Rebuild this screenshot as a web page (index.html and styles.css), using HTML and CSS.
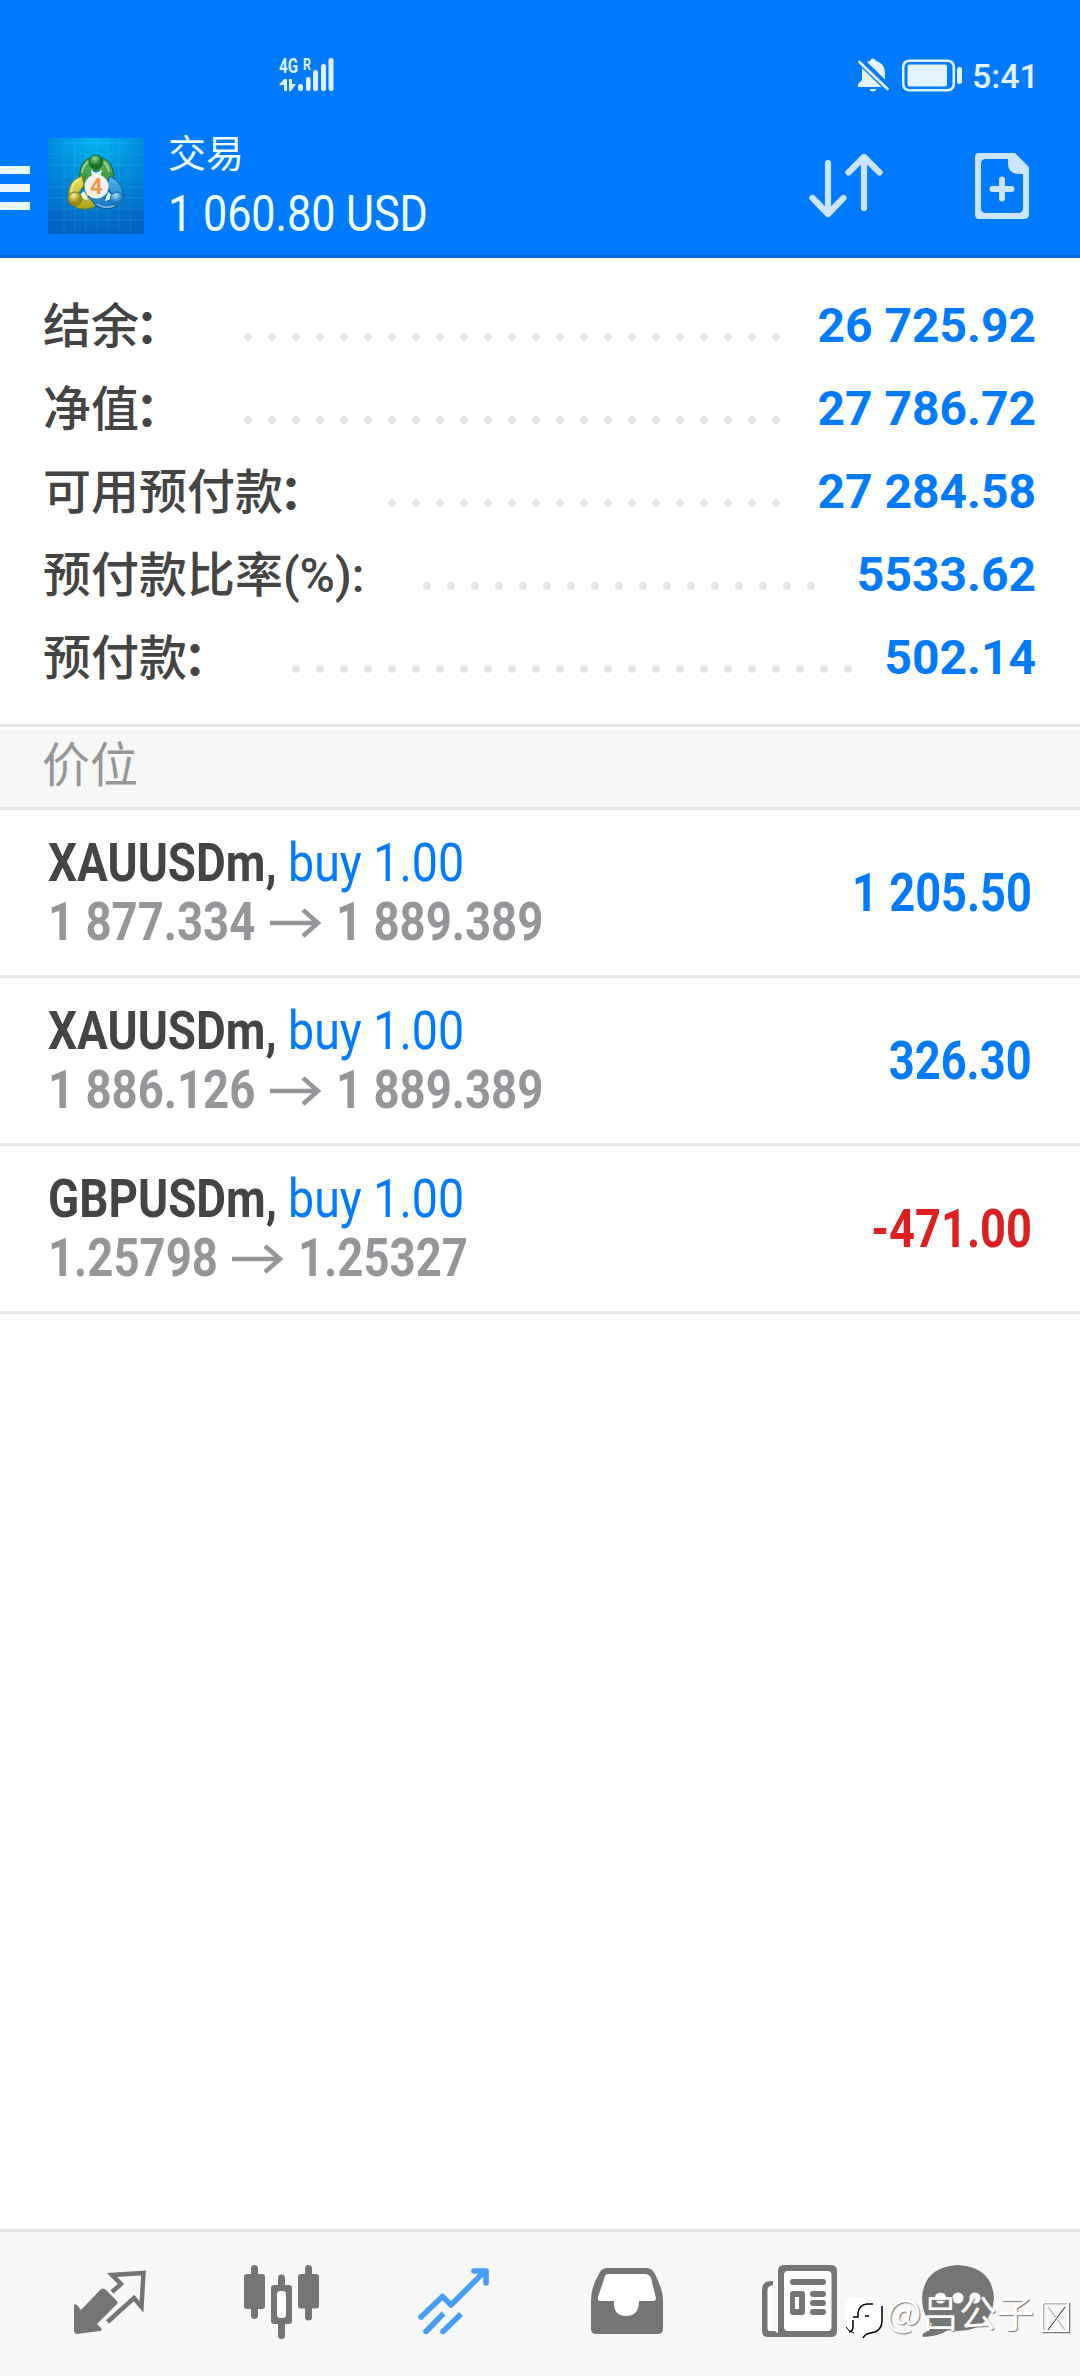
FILE: index.html
```html
<!DOCTYPE html>
<html lang="zh-CN">
<head>
<meta charset="utf-8">
<title>交易</title>
<link rel="stylesheet" href="styles.css">
</head>
<body>
<div class="screen">
  <header class="header">
    <div class="status">
      <svg class="signal" width="60" height="40" viewBox="276 54 60 40">
        <g fill="#dff2ff">
          <text class="net" x="279" y="73" font-size="20" textLength="19" lengthAdjust="spacingAndGlyphs">4G</text>
          <text class="net" x="303" y="70" font-size="16" textLength="8" lengthAdjust="spacingAndGlyphs">R</text>
          <path d="M284 79h3v12h-3v-6h-5zM289 79h3v5h4l-5 7h-2z"/>
          <rect x="298" y="84" width="5" height="7" rx="2.2"/><rect x="306" y="77" width="4.6" height="14" rx="2.2"/><rect x="313" y="70" width="5" height="21" rx="2.2"/><rect x="321" y="64" width="5" height="27" rx="2.2"/><rect x="328.500" y="58" width="5" height="33" rx="2.2"/>
        </g>
      </svg>
      <div class="status-right">
        <svg width="32" height="34" viewBox="857 58 32 34" fill="#e5f2ff">
          <path d="M861.500 67.500l20 19.500h-23.500v-3l4-4v-8.500q0-2 .8-4zM867 62q2-1 3.500-1.500q.5-2 2.500-2t2.500 2q9.500 3 9.500 12v7zM869.500 89h7q-1 2.500-3.500 2.500t-3.500-2.500z"/>
          <path d="M859.500 62l28 27" stroke="#e5f2ff" stroke-width="2.600" stroke-linecap="round"/>
        </svg>
        <svg width="60" height="34" viewBox="902 58 60 34" fill="#e5f2ff">
          <rect x="903.200" y="60.700" width="50.600" height="29.600" rx="6" fill="none" stroke="#d9f2ff" stroke-width="2.600"/>
          <rect x="907.500" y="64.500" width="39.500" height="22" rx="2"/><rect x="957" y="67" width="5" height="17" rx="2.300"/>
        </svg>
        <span class="clock">5:41</span>
      </div>
    </div>
    <div class="toolbar">
      <div class="menu"><i></i><i></i><i></i></div>
      <svg class="logo" width="96" height="96" viewBox="0 0 96 96">
        <defs>
          <radialGradient id="sky" cx=".5" cy="0" r="1"><stop offset="0" stop-color="#00b6f2"/><stop offset=".55" stop-color="#0086d8"/><stop offset="1" stop-color="#0064c0"/></radialGradient>
          <linearGradient id="gr" x2="0" y2="1"><stop stop-color="#66b95c"/><stop offset="1" stop-color="#248638"/></linearGradient>
          <linearGradient id="ye" x2="0" y2="1"><stop stop-color="#ece35c"/><stop offset="1" stop-color="#aaa51c"/></linearGradient>
          <linearGradient id="bl" x2="0" y2="1"><stop stop-color="#55b6ef"/><stop offset="1" stop-color="#1673be"/></linearGradient>
          <radialGradient id="gb" cx=".4" cy=".25"><stop stop-color="#98d88c"/><stop offset="1" stop-color="#17722c"/></radialGradient>
          <radialGradient id="yb" cx=".4" cy=".25"><stop stop-color="#fff28a"/><stop offset="1" stop-color="#968d14"/></radialGradient>
          <radialGradient id="bb" cx=".4" cy=".25"><stop stop-color="#a6defa"/><stop offset="1" stop-color="#1675c2"/></radialGradient>
        </defs>
        <rect width="96" height="96" fill="url(#sky)"/>
        <path d="M0 5h96M0 16h96M0 27h96M0 38h96M0 49h96M0 60h96M0 71h96M0 82h96M16 0v96M27 0v96M38 0v96M49 0v96M60 0v96M71 0v96M82 0v96" stroke="#7edcff" stroke-opacity=".13"/>
        <path d="M33 51Q27 20 48 19Q69 20 65 48L57 52L50 32H46L40 48z" fill="url(#gr)" stroke="#16632a"/>
        <path d="M34 38Q18 43 21 61Q28 76 46 69L54 61L46 51L28 59L36 47z" fill="url(#ye)" stroke="#7c7918"/>
        <path d="M62 38Q78 46 75 65Q61 75 48 68L40 58L51 57L63 64L65 57L58 48z" fill="url(#bl)" stroke="#115993"/>
        <path d="M34 35Q35 23 48 22Q60 23 61 34M24 57Q22 46 31 41M49 66Q57 72 68 67" fill="none" stroke="#fff" stroke-opacity=".5" stroke-width="1.500"/>
        <path d="M43 32l5 3 6-3-2 7h-8zM29 59l7-6 4 9zM67 60l-7-6-3 9z" fill="#effff5"/>
        <circle cx="48" cy="24" r="7" fill="url(#gb)" stroke="#17672b"/><circle cx="27" cy="61" r="7" fill="url(#yb)" stroke="#827e15"/><circle cx="69" cy="61" r="7" fill="url(#bb)" stroke="#126aaf"/>
        <circle cx="48.500" cy="48.500" r="12" fill="#f1f1f1"/>
        <text class="four" x="42" y="56">4</text>
      </svg>
      <div class="heading">
        <div class="title">交易</div>
        <div class="total"><span class="cond">1 060.80 USD</span></div>
      </div>
      <div class="actions">
        <svg width="76" height="70" viewBox="808 152 76 70" fill="none" stroke="#cce4ff" stroke-width="6.200" stroke-linecap="round" stroke-linejoin="round"><path d="M828 163v51M812.500 198l15.500 16 15.500-16M864 208v-51M848.500 172.500L864 157l15.500 15.500"/></svg>
        <svg width="56" height="68" viewBox="974 152 56 68"><path d="M979 153h36l14 14v47q0 5-5 5h-45q-4 0-4-5v-57q0-4 4-4zM986 159q-5 0-5 5v44q0 5 5 5h32q5 0 5-5v-34h-5q-10-1-10-10v-5z" fill="#cce4ff" fill-rule="evenodd"/><path d="M1002 179.500v19M992.500 189h19" stroke="#cce4ff" stroke-width="6" stroke-linecap="round"/></svg>
      </div>
    </div>
  </header>

  <section class="summary">
    <div class="row"><span class="label w192">结余<span class="colon">：</span></span><i class="dots n23"></i><b>26 725.92</b></div>
    <div class="row"><span class="label w192">净值<span class="colon">：</span></span><i class="dots n23"></i><b>27 786.72</b></div>
    <div class="row"><span class="label w336">可用预付款<span class="colon">：</span></span><i class="dots n17"></i><b>27 284.58</b></div>
    <div class="row"><span class="label w371">预付款比率(%):</span><i class="dots n17"></i><b>5533.62</b></div>
    <div class="row"><span class="label w240">预付款<span class="colon">：</span></span><i class="dots n24"></i><b>502.14</b></div>
  </section>

  <h2 class="section">价位</h2>

  <main class="positions">
    <div class="position">
      <div class="info">
        <div class="line"><span class="symbol"><b class="cond bold">XAUUSDm,</b></span><span class="buy cond">buy 1.00</span></div>
        <div class="line prices"><span class="from long"><span class="cond bold">1 877.334</span></span><svg class="arrow" width="52" height="30" viewBox="0 0 52 30"><path d="M0 15h48M33 2l15 13-15 13"/></svg><span class="cond bold">1 889.389</span></div>
      </div>
      <span class="profit cond bold">1 205.50</span>
    </div>
    <div class="position">
      <div class="info">
        <div class="line"><span class="symbol"><b class="cond bold">XAUUSDm,</b></span><span class="buy cond">buy 1.00</span></div>
        <div class="line prices"><span class="from long"><span class="cond bold">1 886.126</span></span><svg class="arrow" width="52" height="30" viewBox="0 0 52 30"><path d="M0 15h48M33 2l15 13-15 13"/></svg><span class="cond bold">1 889.389</span></div>
      </div>
      <span class="profit cond bold">326.30</span>
    </div>
    <div class="position">
      <div class="info">
        <div class="line"><span class="symbol"><b class="cond bold">GBPUSDm,</b></span><span class="buy cond">buy 1.00</span></div>
        <div class="line prices"><span class="from"><span class="cond bold">1.25798</span></span><svg class="arrow" width="52" height="30" viewBox="0 0 52 30"><path d="M0 15h48M33 2l15 13-15 13"/></svg><span class="cond bold">1.25327</span></div>
      </div>
      <span class="profit loss cond bold">-471.00</span>
    </div>
  </main>

  <nav class="tabs">
    <svg viewBox="24 2232 172 144"><path d="M74 2306q0-3 3-1l4 5 19-20q3-3 6 0l10 10q3 3 0 5l-19 19 4 4q2 2-1 3l-23 3q-3 0-3-4z"/><path d="M112 2292l9-8-9-9 31.500-2-2 34-7.500-9-26.500 24" fill="none" stroke="#757575" stroke-width="4.500"/></svg>
    <svg viewBox="196 2232 172 144"><rect x="251" y="2265" width="7" height="54" rx="3.500"/><rect x="244" y="2274" width="21" height="35" rx="3"/><rect x="305" y="2265" width="7" height="55.500" rx="3.500"/><rect x="298" y="2274" width="21" height="34.500" rx="3"/><rect x="278" y="2274.500" width="7" height="64.500" rx="3.500"/><rect x="271" y="2285" width="21" height="39" rx="3"/><rect x="277" y="2291" width="9" height="27" rx="3.500" fill="#fff"/></svg>
    <svg viewBox="368 2232 172 144"><g fill="none" stroke="#469cf9" stroke-width="5.600" stroke-linecap="round" stroke-linejoin="round"><path d="M421 2317l21.500-20.500 8.500 8.500 34-34M474 2271h12v12"/><path stroke-linecap="butt" d="M443.500 2313.500l-17.500 18M461 2314l-18 17.500"/><path d="M426 2331.500h.1M443 2331.500h.1"/></g></svg>
    <svg viewBox="540 2232 172 144"><path d="M607 2268h40q5 0 8 6 8 16 8 26v29q0 5-5 5h-62q-5 0-5-5v-29q0-13 8-26 2-6 8-6z"/><path d="M608 2274h37q4 0 6 4l5 20q0 3-3 3h-14q0 15-13 15t-12-15h-13q-4 0-3-4l6-18q1-5 4-5z" fill="#fff"/></svg>
    <svg viewBox="712 2232 172 144"><path d="M773 2281q-11-1-11 9v41q0 6 6 6h63q6 0 6-6v-60q0-6-6-6h-47q-6 0-6 6v61q-1 2-2 0 1-1-3-1t-5-4v-37q0-4 5-5z"/><rect x="784" y="2271" width="47.500" height="60" rx="4" fill="#fff"/><path d="M772.500 2286v45h-3q-2 0-2-3v-38q0-4 5-4z" fill="#fff"/><rect x="790" y="2279" width="36" height="6" rx="3"/><rect x="790" y="2291" width="15" height="24" rx="3"/><rect x="795" y="2297" width="4" height="12" fill="#fff"/><rect x="810" y="2291" width="16" height="6" rx="3"/><rect x="810" y="2300" width="16" height="6" rx="3"/><rect x="810" y="2309" width="16" height="6" rx="3"/></svg>
    <svg viewBox="884 2232 172 144"><path d="M923 2337q-2-3 3-5 4-3 6-8Q922 2315 922 2298q2-31 36-33 34 2 36 33-2 32-36 33-4 0-10-1-8 6-25 7z"/><g fill="#fff"><circle cx="940.500" cy="2298" r="5.600"/><circle cx="958" cy="2298" r="5.600"/><circle cx="975" cy="2298" r="5.600"/></g></svg>
  </nav>

  <div class="watermark">
    <svg class="mark" width="44" height="50" viewBox="840 2292 44 50"><path d="M843 2306q1-9 10-9h16q9 0 10 9v14q0 12-12 13l-6 5v-5h-8q-10-1-10-13z" fill="#fff"/><path d="M851 2317h5v-4q1-8 9-9h6M863 2316h4M851 2320v7q0 4-4 5M880 2306v14q0 12-12 13-5 1-7 5" fill="none" stroke="#000" stroke-width="1.500"/><path d="M844 2327q3 5 8 6" fill="none" stroke="#000"/></svg>
    <span class="author">@吕公子</span>
    <svg class="box" width="32" height="34" viewBox="1040 2297 32 34" fill="none"><path d="M1043.500 2300.500h26v29h-26z" stroke="#777" stroke-width="1.500"/><path d="M1048 2327l17-23" stroke="#222"/><path d="M1048 2304l17 23" stroke="#888" stroke-width=".8"/><path d="M1042.500 2299.500h25.500v28.500h-25.500z" stroke="#fff" stroke-width="2"/></svg>
  </div>
</div>
</body>
</html>
```
FILE: styles.css
```css
* { box-sizing: border-box; }
body {
  margin: 0;
  background: #fff;
  font-family: Roboto, "Noto Sans CJK SC", sans-serif;
  color: #444;
}
.screen {
  position: relative;
  display: flex;
  flex-direction: column;
  width: 1080px;
  height: 2376px;
  overflow: hidden;
}
svg { display: block; flex: none; }
.cond {
  display: inline-block;
  white-space: pre;
  transform: scaleX(.862);
  transform-origin: 0 50%;
}
.cond.bold { transform: scaleX(.843); }

/* Header */
.header {
  height: 258px;
  background: #007aff;
  border-bottom: 3px solid #006ad8;
  color: #f0ffff;
}
.status {
  display: flex;
  justify-content: space-between;
  height: 120px;
  padding: 54px 45px 0 276px;
}
.net { font-weight: 700; }
.status-right { display: flex; padding-top: 4px; }
.status-right svg:nth-child(2) { margin-left: 13px; }
.clock {
  width: 63px;
  margin-left: 10px;
  font-size: 34px;
  line-height: 37px;
  font-weight: 500;
  color: #e2f3ff;
}
.toolbar { display: flex; align-items: flex-start; padding-right: 50px; }
.menu { display: grid; gap: 10px; width: 30px; padding-top: 46px; }
.menu i { height: 8px; background: #e8f8ff; }
.logo { margin: 18px 24px 0 18px; }
.four { font: 700 22px Roboto, sans-serif; fill: #f49345; }
.heading { flex: 1; }
.title { font-size: 38px; line-height: 44px; padding-top: 12px; }
.total { font-size: 50px; line-height: 60px; padding-top: 8px; }
.actions { display: flex; gap: 90px; padding-top: 32px; }

/* Account summary */
.summary {
  height: 469px;
  padding: 26px 44px 0 43px;
  border-bottom: 3px solid #e5e5e5;
}
.row { display: flex; align-items: center; height: 83px; font-size: 48px; }
.label { flex: none; padding-top: 2px; white-space: nowrap; font-weight: 500; line-height: 60px; }
.colon { margin-left: -4px; font-weight: 700; }
.w192 { width: 193px; }
.w240 { width: 241px; }
.w336 { width: 337px; }
.w371 { width: 372px; }
.dots {
  flex: none;
  height: 24px;
  margin-top: 23px;
  background: radial-gradient(circle, #e5e5e5 3.500px, transparent 4.200px) 0 0 / 24px 24px;
}
.n17 { width: 408px; }
.n23 { width: 552px; }
.n24 { width: 576px; }
.row b { margin-left: auto; color: #007aff; white-space: pre; }

.section {
  height: 83px;
  margin: 0;
  padding: 0 42px;
  border-top: 3px solid #fff;
  border-bottom: 3px solid #e5e5e5;
  background: #f7f7f7;
  color: #949699;
  font-size: 48px;
  font-weight: 400;
  line-height: 72px;
}

/* Open positions */
.positions { flex: 1; }
.position {
  display: flex;
  justify-content: space-between;
  align-items: center;
  height: 168px;
  padding: 0 48px;
  border-bottom: 3px solid #e5e5e5;
  font-size: 54px;
}
.info { padding-bottom: 2px; }
.line { display: flex; align-items: center; height: 59px; line-height: 59px; white-space: nowrap; }
.symbol { width: 240px; }
.symbol .cond.bold { transform: scaleX(.848); }
.buy { color: #007aff; }
.prices { font-weight: 700; color: #949699; }
.from { width: 184px; }
.from.long { width: 222px; }
.arrow { margin: 3px 14px 0 0; fill: none; stroke: #949699; stroke-width: 4.500px; }
.profit { font-weight: 700; color: #007aff; }
.profit.cond { transform: scaleX(.837); transform-origin: 100% 50%; }
.profit.loss { color: #dd1f1f; }

/* Bottom tabs */
.tabs {
  display: flex;
  height: 147px;
  padding-left: 24px;
  border-top: 3px solid #e5e5e5;
  background: #f7f7f7;
}
.tabs svg { width: 172px; height: 144px; fill: #757575; }

/* Author mark over the page corner */
.watermark {
  position: absolute;
  right: 8px;
  bottom: 34px;
  display: flex;
  align-items: center;
}
.author {
  margin: -12px 6px 0 0;
  font: 400 37.500px/50px "Noto Sans CJK SC", sans-serif;
  color: #fff;
  text-shadow: 1px 1px 1px #777;
}
```
